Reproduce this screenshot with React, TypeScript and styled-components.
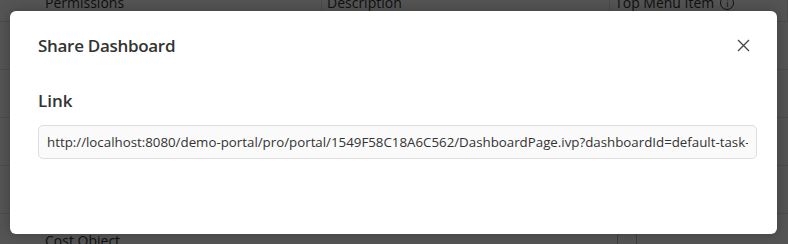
import React from "react";
import styled, { createGlobalStyle } from "styled-components";

const Global = createGlobalStyle`
  html, body { margin: 0; padding: 0; }
  body { width: 788px; height: 244px; overflow: hidden; background: #fff; font-family: "Open Sans", "Noto Sans", sans-serif; }
`;

const Page = styled.div`
  position: relative;
  width: 788px;
  height: 244px;
  overflow: hidden;
  background: #ffffff;
`;

const Table = styled.div`
  display: grid;
  grid-template-columns: 322px 288px 1fr;
  margin-top: -7px;
`;

const HeadCell = styled.div<{ $first?: boolean }>`
  height: 29px;
  box-sizing: border-box;
  border-bottom: 1px solid #e2e2e2;
  border-right: 1px solid #e2e2e2;
  padding-left: ${(p) => (p.$first ? "45px" : "5px")};
  font-size: 14px;
  line-height: 20px;
  color: #333;
  display: flex;
  align-items: flex-start;
  gap: 6px;
`;

const Cell = styled.div<{ $first?: boolean }>`
  height: 48px;
  box-sizing: border-box;
  border-bottom: 1px solid #e2e2e2;
  padding: 17px 0 0 ${(p) => (p.$first ? "45px" : "7px")};
  font-size: 14px;
  line-height: 20px;
  color: #333;
`;

const Info = styled.span`
  display: inline-flex;
  align-items: center;
  justify-content: center;
  width: 12px;
  height: 12px;
  border: 1px solid #333;
  border-radius: 50%;
  margin-top: 3px;
  font-size: 9px;
  line-height: 1;
`;

const CheckBox = styled.span`
  display: block;
  width: 20px;
  height: 20px;
  box-sizing: border-box;
  border: 1px solid #bbb;
  border-radius: 3px;
  margin-top: 2px;
`;

const Overlay = styled.div`
  position: absolute;
  inset: 0;
  background: rgba(0, 0, 0, 0.67);
`;

const Modal = styled.div`
  position: absolute;
  left: 10px;
  top: 11px;
  width: 767px;
  height: 223px;
  background: #fff;
  border-radius: 6px;
  box-shadow: 0 0 12px rgba(0, 0, 0, 0.25);
  box-sizing: border-box;
  display: flex;
  flex-direction: column;
`;

const Header = styled.div`
  display: flex;
  align-items: center;
  justify-content: space-between;
  height: 68px;
  padding: 0 26px 0 28px;
  box-sizing: border-box;
`;

const Title = styled.h2`
  margin: 0;
  font-size: 17px;
  font-weight: 600;
  color: #333;
  letter-spacing: -0.3px;
`;

const Close = styled.button`
  border: 0;
  background: none;
  padding: 0;
  width: 16px;
  height: 16px;
  display: flex;
  align-items: center;
  justify-content: center;
  cursor: pointer;
`;

const Body = styled.div`
  padding: 10px 20px 0 28px;
  display: flex;
  flex-direction: column;
  gap: 12px;
`;

const Label = styled.div`
  font-size: 17px;
  font-weight: 600;
  color: #333;
  line-height: 24px;
`;

const Input = styled.input`
  width: 719px;
  height: 34px;
  box-sizing: border-box;
  border: 1px solid #dedede;
  border-radius: 5px;
  background: #fafafa;
  padding: 0 8px;
  font-family: "Open Sans", "Noto Sans", sans-serif;
  font-size: 13.3px;
  color: #333;
  outline: none;
`;

const url =
  "http://localhost:8080/demo-portal/pro/portal/1549F58C18A6C562/DashboardPage.ivp?dashboardId=default-task-list";

export default function App() {
  return (
    <Page>
      <Global />
      <Table>
        <HeadCell $first>Permissions</HeadCell>
        <HeadCell>Description</HeadCell>
        <HeadCell>
          Top Menu Item
          <Info>i</Info>
        </HeadCell>
        {Array.from({ length: 5 }).map((_, i) => (
          <React.Fragment key={i}>
            <Cell $first>{i === 4 ? "Cost Object" : null}</Cell>
            <Cell />
            <Cell>{i === 4 ? <CheckBox /> : null}</Cell>
          </React.Fragment>
        ))}
      </Table>
      <Overlay />
      <Modal>
        <Header>
          <Title>Share Dashboard</Title>
          <Close aria-label="Close">
            <svg width="13" height="13" viewBox="0 0 13 13">
              <path d="M1 1 L12 12 M12 1 L1 12" stroke="#444" strokeWidth="1.3" />
            </svg>
          </Close>
        </Header>
        <Body>
          <Label>Link</Label>
          <Input readOnly value={url} />
        </Body>
      </Modal>
    </Page>
  );
}
